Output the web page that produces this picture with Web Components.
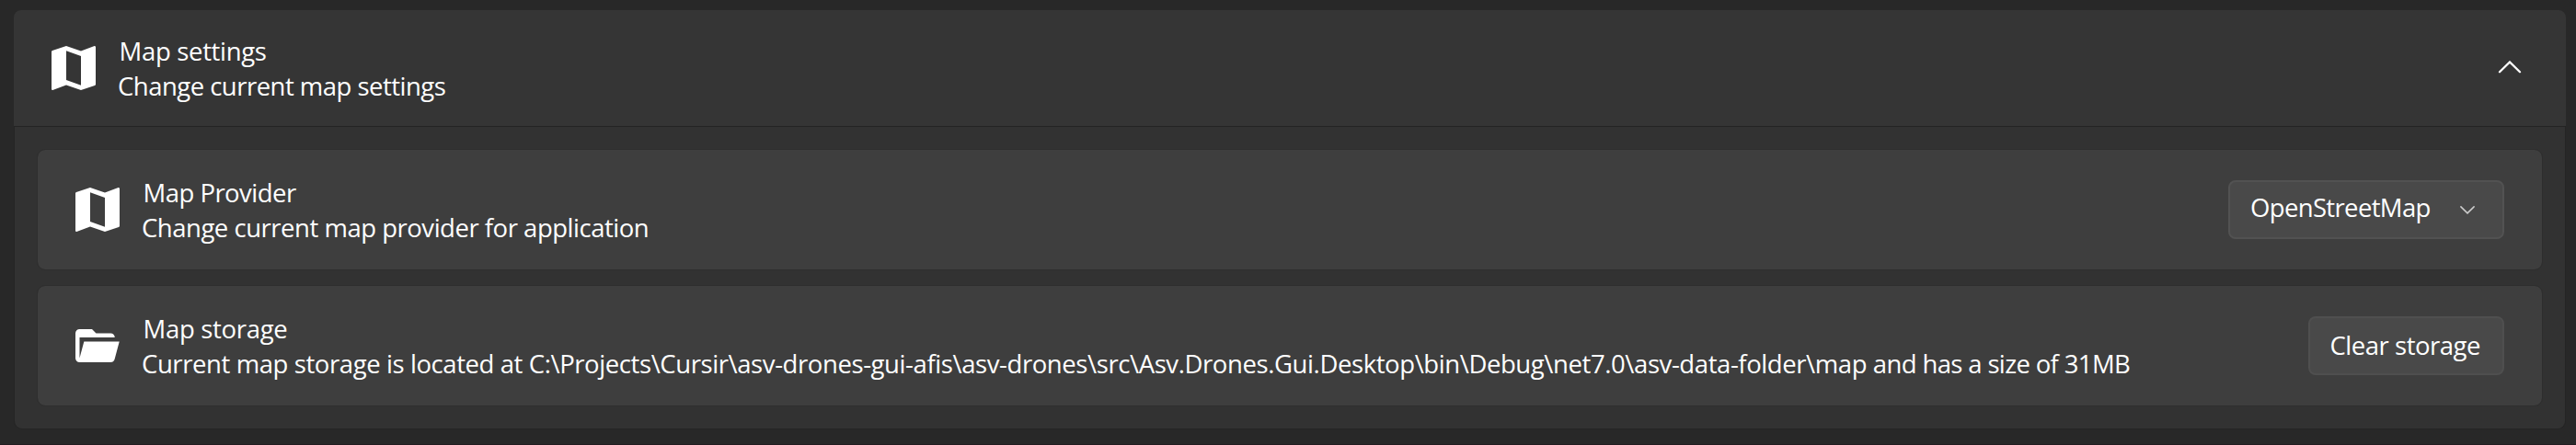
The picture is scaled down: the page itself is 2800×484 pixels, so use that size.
<!DOCTYPE html>
<html lang="en">
<head>
<meta charset="utf-8">
<title>Map settings</title>
<style>
  html, body { margin: 0; height: 100%; }
  body {
    box-sizing: border-box;
    height: 484px;
    overflow: hidden;
    padding: 11px 11px 0 15px;
    background: #282828;
    border-bottom: 1px solid #231c20;
    color: #fff;
    font: 27.5px/38px "Open Sans", "Noto Sans", sans-serif;
  }
</style>
</head>
<body>
<settings-expander>
  <settings-row slot="header">
    <app-icon slot="icon" name="map"></app-icon>
    <fit-text slot="title" track="-0.33">Map settings</fit-text>
    <fit-text slot="description" track="-0.52">Change current map settings</fit-text>
    <app-icon slot="action" name="chevron-up"></app-icon>
  </settings-row>
  <settings-row card>
    <app-icon slot="icon" name="map"></app-icon>
    <fit-text slot="title" track="-0.54">Map Provider</fit-text>
    <fit-text slot="description" track="-0.48">Change current map provider for application</fit-text>
    <combo-box slot="action"><fit-text track="-0.65">OpenStreetMap</fit-text></combo-box>
  </settings-row>
  <settings-row card>
    <app-icon slot="icon" name="folder"></app-icon>
    <fit-text slot="title" track="-0.32">Map storage</fit-text>
    <fit-text slot="description" track="-0.41">Current map storage is located at C:\Projects\Cursir\asv-drones-gui-afis\asv-drones\src\Asv.Drones.Gui.Desktop\bin\Debug\net7.0\asv-data-folder\map <span style="letter-spacing:-0.64px">and has a size of 31MB</span></fit-text>
    <push-button slot="action"><fit-text track="-0.475">Clear storage</fit-text></push-button>
  </settings-row>
</settings-expander>

<script>
  const define = (name, html, setup) => {
    const template = document.createElement('template');
    template.innerHTML = html;
    customElements.define(name, class extends HTMLElement {
      constructor() {
        super();
        this.attachShadow({ mode: 'open' }).append(template.content.cloneNode(true));
      }
      connectedCallback() { if (setup) setup(this); }
    });
  };

  const icons = {
    map: [48, 48, '<svg viewBox="3 3 18 18" width="48" height="48"><path fill="#fff" d="M15 5.1 9 3 3.36 4.9C3.15 4.97 3 5.15 3 5.38V20.5c0 .28.22.5.5.5L9 18.9l6 2.1 5.64-1.9c.21-.07.36-.25.36-.48V3.5c0-.28-.22-.5-.5-.5L15 5.1zM15 19l-6-2.11V5l6 2.11V19z"/></svg>'],
    folder: [48, 36, '<svg viewBox="2 4 21.333 16" width="48" height="36"><path fill="#fff" d="M19 20H4c-1.11 0-2-.9-2-2V6c0-1.11.89-2 2-2h6l2 2h7a2 2 0 0 1 2 2H4v10l2.14-8h17.07l-2.28 8.5c-.23.87-1.01 1.5-1.93 1.5z"/></svg>'],
    'chevron-up': [26, 14, '<svg viewBox="0 0 26 14" width="26" height="14"><path fill="none" stroke="#fff" stroke-width="2.3" stroke-linecap="round" d="M2 12.3 13 1.5l11 10.8"/></svg>'],
    'chevron-down': [16, 9, '<svg viewBox="0 0 16 9" width="16" height="9"><path fill="none" stroke="#cdcdcd" stroke-width="1.5" stroke-linecap="round" d="M.9.9 8 7.9 15.1.9"/></svg>']
  };

  define('app-icon', `
    <style>:host { display: block; flex: none; } :host([name="chevron-up"]) { padding-bottom: 2px; } svg { display: block; }</style>
    <div id="art"></div>`,
    el => {
      const [w, h, svg] = icons[el.getAttribute('name')];
      el.style.width = w + 'px';
      el.style.height = h + 'px';
      el.shadowRoot.getElementById('art').innerHTML = svg;
    });

  define('fit-text', `
    <style>:host { display: block; white-space: nowrap; }</style>
    <slot></slot>`,
    el => { el.style.letterSpacing = el.getAttribute('track') + 'px'; });

  define('combo-box', `
    <style>
      :host { display: flex; box-sizing: border-box; width: 300px; height: 64px;
        align-items: center; justify-content: space-between; padding: 0 30px 0 22px;
        border: 2px solid #525252; border-radius: 8px; background: #494949; }
      .label { padding-bottom: 4px; }
    </style>
    <div class="label"><slot></slot></div>
    <app-icon name="chevron-down"></app-icon>`);

  define('push-button', `
    <style>
      :host { display: flex; box-sizing: border-box; width: 213px; height: 64px;
        align-items: center; padding: 0 0 0 21.5px;
        border: 2px solid #4f4f4f; border-radius: 8px; background: #494949; }
    </style>
    <slot></slot>`);

  define('settings-row', `
    <style>
      :host { display: flex; box-sizing: border-box; align-items: center;
        height: 126px; padding: 0 48px 0 41px; }
      :host([card]) { height: 132px; padding: 0 41px;
        background: #3e3e3e; background-clip: padding-box;
        border: 1px solid #2e2e2e; border-radius: 9px; }
      .icon { flex: none; width: 48px; }
      .text { flex: 1; min-width: 0; margin-left: 24px; padding-top: 2px; }
      .title { padding-left: 1.6px; }
    </style>
    <div class="icon"><slot name="icon"></slot></div>
    <div class="text">
      <div class="title"><slot name="title"></slot></div>
      <slot name="description"></slot>
    </div>
    <slot name="action"></slot>`);

  define('settings-expander', `
    <style>
      :host { display: block; }
      .header { background: #353535; border-radius: 8px 8px 0 0; border-bottom: 1px solid #242424; }
      .body { display: flex; flex-direction: column; gap: 16px; box-sizing: border-box;
        margin: 0 1px; height: 328px; padding: 24px; background: #323232;
        border-radius: 0 0 8px 8px; box-shadow: 0 0 0 1px #252525; clip-path: inset(0 -1px -1px -1px); }
    </style>
    <div class="header"><slot name="header"></slot></div>
    <div class="body"><slot></slot></div>`);
</script>
</body>
</html>
